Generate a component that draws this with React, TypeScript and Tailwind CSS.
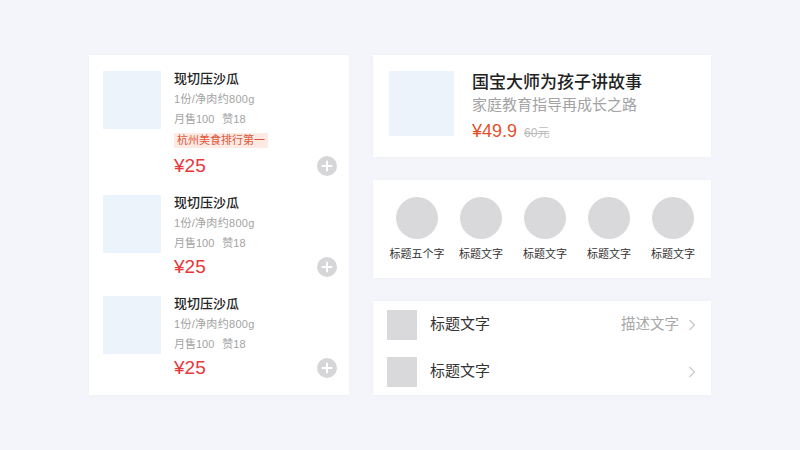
import React from "react";

const FONT = { fontFamily: '"Liberation Sans", "Noto Sans CJK SC", sans-serif' };

function Plus() {
  return (
    <div className="w-[20px] h-[20px] rounded-full bg-[#d6d6d8] flex items-center justify-center shrink-0">
      <svg width="12" height="12" viewBox="0 0 12 12">
        <path d="M6 1.5v9M1.5 6h9" stroke="#fff" strokeWidth="2" strokeLinecap="round" />
      </svg>
    </div>
  );
}

function FoodItem({ tag }: { tag?: string }) {
  return (
    <div className="flex">
      <div className="w-[58px] h-[58px] bg-[#ecf3fa] shrink-0" />
      <div className="ml-[13px] flex-1 flex flex-col">
        <div className="text-[13px] leading-[16px] text-[#222] font-medium">现切压沙瓜</div>
        <div className="mt-[2px] text-[11px] leading-[20px] text-[#a3a3a3] tracking-[0.3px]">1份/净肉约800g</div>
        <div className="text-[11px] leading-[20px] text-[#a3a3a3] flex gap-[8px]">
          <span>月售100</span>
          <span>赞18</span>
        </div>
        {tag && (
          <div className="mt-[4px] mb-[4px] self-start h-[15px] px-[3px] bg-[#fdeae3] text-[#e0553a] text-[11px] leading-[15px]">
            {tag}
          </div>
        )}
        <div className="mt-[2px] flex items-center justify-between h-[24px]">
          <span className="text-[19px] leading-[24px] text-[#e8383b] font-medium">¥25</span>
          <Plus />
        </div>
      </div>
    </div>
  );
}

function Chevron() {
  return (
    <svg width="8" height="12" viewBox="0 0 8 12" className="shrink-0">
      <path d="M1.5 1l5 5-5 5" fill="none" stroke="#c8c8c8" strokeWidth="1.2" />
    </svg>
  );
}

export default function App() {
  const labels = ["标题五个字", "标题文字", "标题文字", "标题文字", "标题文字"];
  return (
    <div className="w-[800px] h-[450px] bg-[#f4f5fb] flex items-center justify-center" style={FONT}>
      <div className="flex gap-[24px]">
        <div className="w-[260px] h-[340px] bg-white pt-[16px] pl-[14px] pr-[12px] flex flex-col gap-[17px] shadow-[0_0_3px_rgba(0,0,0,0.03)]">
          <FoodItem tag="杭州美食排行第一" />
          <FoodItem />
          <FoodItem />
        </div>
        <div className="w-[338px] flex flex-col gap-[23px]">
          <div className="h-[102px] bg-white pt-[16px] pl-[16px] flex shadow-[0_0_3px_rgba(0,0,0,0.03)]">
            <div className="w-[65px] h-[65px] bg-[#ecf3fa] shrink-0" />
            <div className="ml-[18px] mt-[1px] flex flex-col">
              <div className="text-[17px] leading-[22px] text-[#222] font-medium">国宝大师为孩子讲故事</div>
              <div className="text-[15px] leading-[22px] text-[#a3a3a3]">家庭教育指导再成长之路</div>
              <div className="flex items-baseline gap-[7px] leading-[26px] mt-[2px]">
                <span className="text-[18px] text-[#e5502d] font-medium">¥49.9</span>
                <span className="text-[12px] text-[#bbbbbb] line-through">60元</span>
              </div>
            </div>
          </div>
          <div className="h-[98px] bg-white pt-[17px] pl-[12px] pr-[6px] grid grid-cols-5 shadow-[0_0_3px_rgba(0,0,0,0.03)]">
            {labels.map((l, i) => (
              <div key={i} className="flex flex-col items-center">
                <div className="w-[42px] h-[42px] rounded-full bg-[#d9d9db]" />
                <div className="mt-[7px] text-[11px] leading-[16px] text-[#333] whitespace-nowrap">{l}</div>
              </div>
            ))}
          </div>
          <div className="h-[94px] bg-white pl-[14px] pr-[15px] flex flex-col shadow-[0_0_3px_rgba(0,0,0,0.03)]">
            <div className="h-[47px] flex items-center">
              <div className="w-[30px] h-[30px] bg-[#d9d9db] shrink-0" />
              <div className="ml-[13px] text-[15px] text-[#333] flex-1">标题文字</div>
              <div className="text-[14.5px] text-[#a8a8a8] mr-[9px]">描述文字</div>
              <Chevron />
            </div>
            <div className="h-[47px] flex items-center">
              <div className="w-[30px] h-[30px] bg-[#d9d9db] shrink-0" />
              <div className="ml-[13px] text-[15px] text-[#333] flex-1">标题文字</div>
              <Chevron />
            </div>
          </div>
        </div>
      </div>
    </div>
  );
}
